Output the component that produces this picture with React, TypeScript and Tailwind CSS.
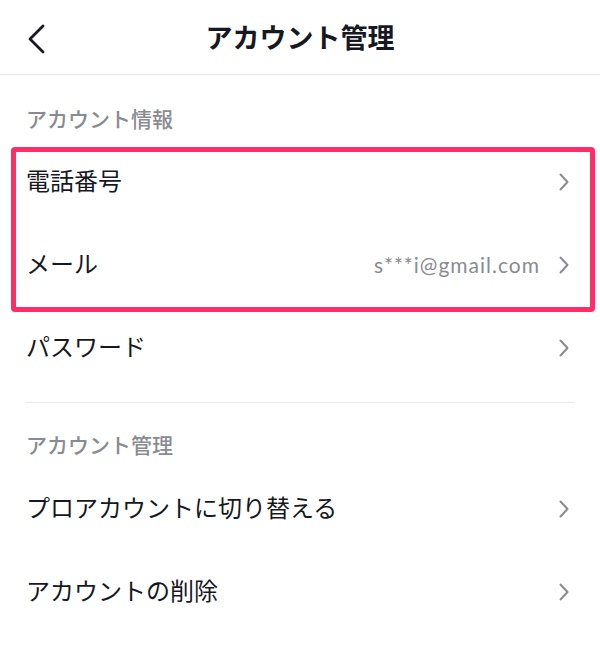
const jp = "font-['Noto_Sans_CJK_JP',sans-serif]";

function Chevron() {
  return (
    <svg width="12" height="18" viewBox="0 0 12 18" className="shrink-0">
      <path d="M2.5 1.5 L9.5 9 L2.5 16.5" fill="none" stroke="#8a8b91" strokeWidth="2" strokeLinecap="round" strokeLinejoin="round" />
    </svg>
  );
}

function Row({ label, value }: { label: string; value?: string }) {
  return (
    <div className="flex h-[83px] items-center justify-between pl-[26px] pr-[30px]">
      <span className={`${jp} pb-[3px] text-[24px] leading-none text-[#161823]`}>{label}</span>
      <div className="flex items-center gap-[18px]">
        {value ? (
          <span className="font-['Lato',sans-serif] pb-[1px] text-[21px] leading-none tracking-[1px] text-[#8a8b91]">
            {value}
          </span>
        ) : null}
        <Chevron />
      </div>
    </div>
  );
}

function SectionLabel({ children }: { children: string }) {
  return (
    <div className={`${jp} px-[26px] text-[21px] font-medium leading-[28px] text-[#8a8b91]`}>{children}</div>
  );
}

export default function App() {
  return (
    <div className="h-[661px] w-[600px] overflow-hidden bg-white">
      <header className="relative flex h-[75px] items-center justify-center border-b border-[#e3e3e4]">
        <svg width="20" height="32" viewBox="0 0 20 32" className="absolute left-[26px] top-[23px]">
          <path d="M17 3 L4 16 L17 29" fill="none" stroke="#161823" strokeWidth="2.8" strokeLinecap="round" strokeLinejoin="round" />
        </svg>
        <h1 className={`${jp} pb-[2px] text-[27px] font-bold leading-none text-[#161823]`}>アカウント管理</h1>
      </header>

      <div className="pt-[29px] pb-[8px]">
        <SectionLabel>アカウント情報</SectionLabel>
      </div>

      <div className="relative">
        <Row label="電話番号" />
        <Row label="メール" value="s***i@gmail.com" />
        <div className="pointer-events-none absolute left-[11px] right-[5px] top-[7px] bottom-[-6px] rounded-[4px] border-[5px] border-[#fe2c68]" />
      </div>
      <Row label="パスワード" />

      <div className="mx-[25px] mt-[13px] h-px bg-[#ebebec]" />

      <div className="pt-[27px] pb-[9px]">
        <SectionLabel>アカウント管理</SectionLabel>
      </div>
      <Row label="プロアカウントに切り替える" />
      <Row label="アカウントの削除" />
    </div>
  );
}
